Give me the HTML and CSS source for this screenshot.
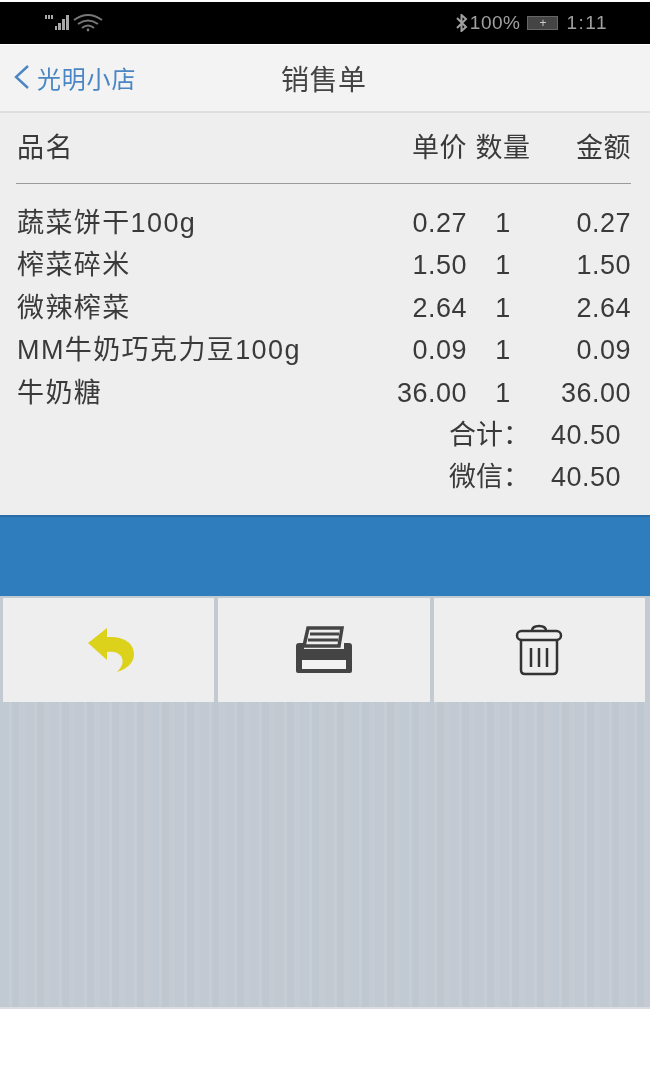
FILE: index.html
```html
<!DOCTYPE html>
<html lang="zh-CN">
<head>
    <meta charset="UTF-8">
    <meta name="viewport" content="width=device-width, initial-scale=1.0">
    <title>销售单</title>
    <link rel="stylesheet" href="styles.css">
</head>
<body>
    <div class="phone">

        <div class="statusbar">
            <div class="status-left">
                <svg width="60" height="20" viewBox="0 0 60 20">
                    <g fill="#a8a8a8">
                        <rect x="1" y="3" width="2" height="4"/>
                        <rect x="4" y="3" width="2" height="4"/>
                        <rect x="7" y="3" width="2" height="4"/>
                        <rect x="11" y="14" width="2" height="4"/>
                        <rect x="14" y="11" width="3" height="7"/>
                        <rect x="18" y="7" width="3" height="11"/>
                        <rect x="22" y="3" width="3" height="15"/>
                    </g>
                    <g fill="none" stroke="#777" stroke-width="2">
                        <path d="M30 8 Q44 -2 58 8"/>
                        <path d="M34 12 Q44 5 54 12"/>
                        <path d="M38 16 Q44 11 50 16"/>
                    </g>
                    <circle cx="44" cy="18" r="1.4" fill="#777"/>
                </svg>
            </div>
            <div class="status-right">
                <svg class="bt" width="13" height="18" viewBox="0 0 13 18">
                    <path d="M2 4 L11 13 L6.5 17 V1 L11 5 L2 14" fill="none" stroke="#a0a0a0" stroke-width="2"/>
                </svg>
                <span class="percent">100%</span>
                <span class="battery"><span class="battery-plus">+</span></span>
                <span class="clock">1:11</span>
            </div>
        </div>

        <div class="navbar">
            <div class="back">
                <svg width="18" height="26" viewBox="0 0 18 26">
                    <path d="M15 2 L3 13 L15 24" fill="none" stroke="#4a86c4" stroke-width="2.4"/>
                </svg>
                <span>光明小店</span>
            </div>
            <div class="title">销售单</div>
        </div>

        <div class="receipt">
            <div class="row head">
                <div class="name">品名</div>
                <div class="price">单价</div>
                <div class="qty">数量</div>
                <div class="amount">金额</div>
            </div>
            <div class="rule"></div>
            <div class="row">
                <div class="name">蔬菜饼干100g</div>
                <div class="price">0.27</div>
                <div class="qty">1</div>
                <div class="amount">0.27</div>
            </div>
            <div class="row">
                <div class="name">榨菜碎米</div>
                <div class="price">1.50</div>
                <div class="qty">1</div>
                <div class="amount">1.50</div>
            </div>
            <div class="row">
                <div class="name">微辣榨菜</div>
                <div class="price">2.64</div>
                <div class="qty">1</div>
                <div class="amount">2.64</div>
            </div>
            <div class="row">
                <div class="name">MM牛奶巧克力豆100g</div>
                <div class="price">0.09</div>
                <div class="qty">1</div>
                <div class="amount">0.09</div>
            </div>
            <div class="row">
                <div class="name">牛奶糖</div>
                <div class="price">36.00</div>
                <div class="qty">1</div>
                <div class="amount">36.00</div>
            </div>
            <div class="total">
                <div class="total-label">合计：</div>
                <div class="total-value">40.50</div>
            </div>
            <div class="total">
                <div class="total-label">微信：</div>
                <div class="total-value">40.50</div>
            </div>
        </div>

        <div class="bluebar"></div>

        <div class="actions">
            <div class="action">
                <svg class="undo" width="50" height="46" viewBox="0 0 50 46">
                    <path d="M2 16 L21 1 L21 10 C36 9 48 15 48 27 C48 36 41 42 31 45 C37 39 38 34 35 29 C32 25 27 24 21 25 L21 33 Z" fill="#dcd21c"/>
                </svg>
            </div>
            <div class="action">
                <svg width="58" height="48" viewBox="0 0 58 48">
                    <path d="M13 2 H47 L44 20 H9 Z" fill="none" stroke="#444" stroke-width="3.5"/>
                    <path d="M15 8 H44 M13 14 H43" stroke="#444" stroke-width="3"/>
                    <path d="M4 17 H9 V23 H49 V17 H54 Q57 17 57 20 V45 Q57 47 55 47 H3 Q1 47 1 45 V20 Q1 17 4 17 Z" fill="#444"/>
                    <rect x="7" y="34" width="44" height="9" fill="#f2f2f2"/>
                </svg>
            </div>
            <div class="action">
                <svg width="48" height="52" viewBox="0 0 48 52">
                    <g fill="none" stroke="#333" stroke-width="2.5">
                        <path d="M17 7 Q17 2 24 2 Q31 2 31 7"/>
                        <rect x="2" y="7" width="44" height="9" rx="4.5"/>
                        <path d="M6 16 V46 Q6 50 10 50 H38 Q42 50 42 46 V16"/>
                        <path d="M16 24 V43 M24 24 V43 M32 24 V43"/>
                    </g>
                </svg>
            </div>
        </div>

        <div class="stripes"></div>
    </div>
</body>
</html>
```

FILE: styles.css
```css
*{
    box-sizing: border-box;
}

html, body{
    margin: 0;
    padding: 0;
    background: #fff;
}

body{
    font-family: "Liberation Sans", "Noto Sans CJK SC", sans-serif;
    color: #3a3a3a;
}

.phone{
    width: 650px;
    height: 1079px;
    padding-top: 2px;
    overflow: hidden;
    filter: blur(0.4px);
}

.statusbar{
    height: 42px;
    background: #000;
    display: flex;
    justify-content: space-between;
    align-items: center;
    padding: 0 42px 0 44px;
    color: #a0a0a0;
    font-size: 19px;
}

.status-left{
    display: flex;
    margin-top: -2px;
}

.status-right{
    display: flex;
    align-items: center;
}

.percent{
    margin-left: 2px;
    letter-spacing: 0.5px;
}

.battery{
    width: 31px;
    height: 14px;
    margin: 0 8px 0 7px;
    background: #444;
    border: 1px solid #666;
    display: flex;
    align-items: center;
    justify-content: center;
    color: #ccc;
    font-size: 12px;
    line-height: 1;
}

.clock{
    letter-spacing: 1.5px;
}

.navbar{
    height: 68px;
    margin-top: 1px;
    background: #f3f3f3;
    border-bottom: 2px solid #dedede;
    position: relative;
    display: flex;
    align-items: center;
    padding-left: 13px;
}

.back{
    display: flex;
    align-items: center;
    gap: 6px;
    color: #4a86c4;
    font-size: 24px;
    letter-spacing: 0.8px;
    margin-top: -2px;
}

.title{
    position: absolute;
    left: 281px;
    top: 19px;
    font-size: 28px;
    line-height: 34px;
    color: #444;
    letter-spacing: 0.5px;
}

.receipt{
    height: 402px;
    padding: 15px 19px 0 17px;
    background: #eeeeee;
    font-size: 27px;
    letter-spacing: 0.5px;
}

.row{
    display: grid;
    grid-template-columns: 1fr 110px 72px 92px;
    height: 42.4px;
    line-height: 42px;
    white-space: nowrap;
}

.head{
    height: 40px;
    line-height: 40px;
}

.row .name{
    letter-spacing: 1.4px;
}

.price, .amount{
    text-align: right;
}

.qty{
    text-align: center;
}

.rule{
    height: 1px;
    margin: 15px 0 18px -1px;
    background: #9a9a9a;
}

.total{
    display: flex;
    justify-content: flex-end;
    height: 42.4px;
    line-height: 42px;
    padding-right: 10px;
}

.total-label{
    width: 90px;
    white-space: nowrap;
    letter-spacing: 0;
}

.total-value{
    width: 82px;
    text-align: right;
}

.bluebar{
    height: 81px;
    background: #2f7dbd;
    border-top: 2px solid #2a6ca6;
}

.actions{
    height: 106px;
    display: grid;
    grid-template-columns: repeat(3, 1fr);
    gap: 4px;
    padding: 2px 5px 0 3px;
    background: #c3cad2;
}

.action{
    height: 104px;
    background: #eeeeee;
    display: flex;
    align-items: center;
    justify-content: center;
}

.undo{
    margin-left: 4px;
}

.stripes{
    height: 307px;
    border-bottom: 2px solid #d9dce0;
    background: repeating-linear-gradient(90deg, #c1c9d2 0, #c1c9d2 9px, #c6cdd5 9px, #c6cdd5 12px, #bfc7d0 12px, #bfc7d0 19px, #c4cbd3 19px, #c4cbd3 25px);
}
```
